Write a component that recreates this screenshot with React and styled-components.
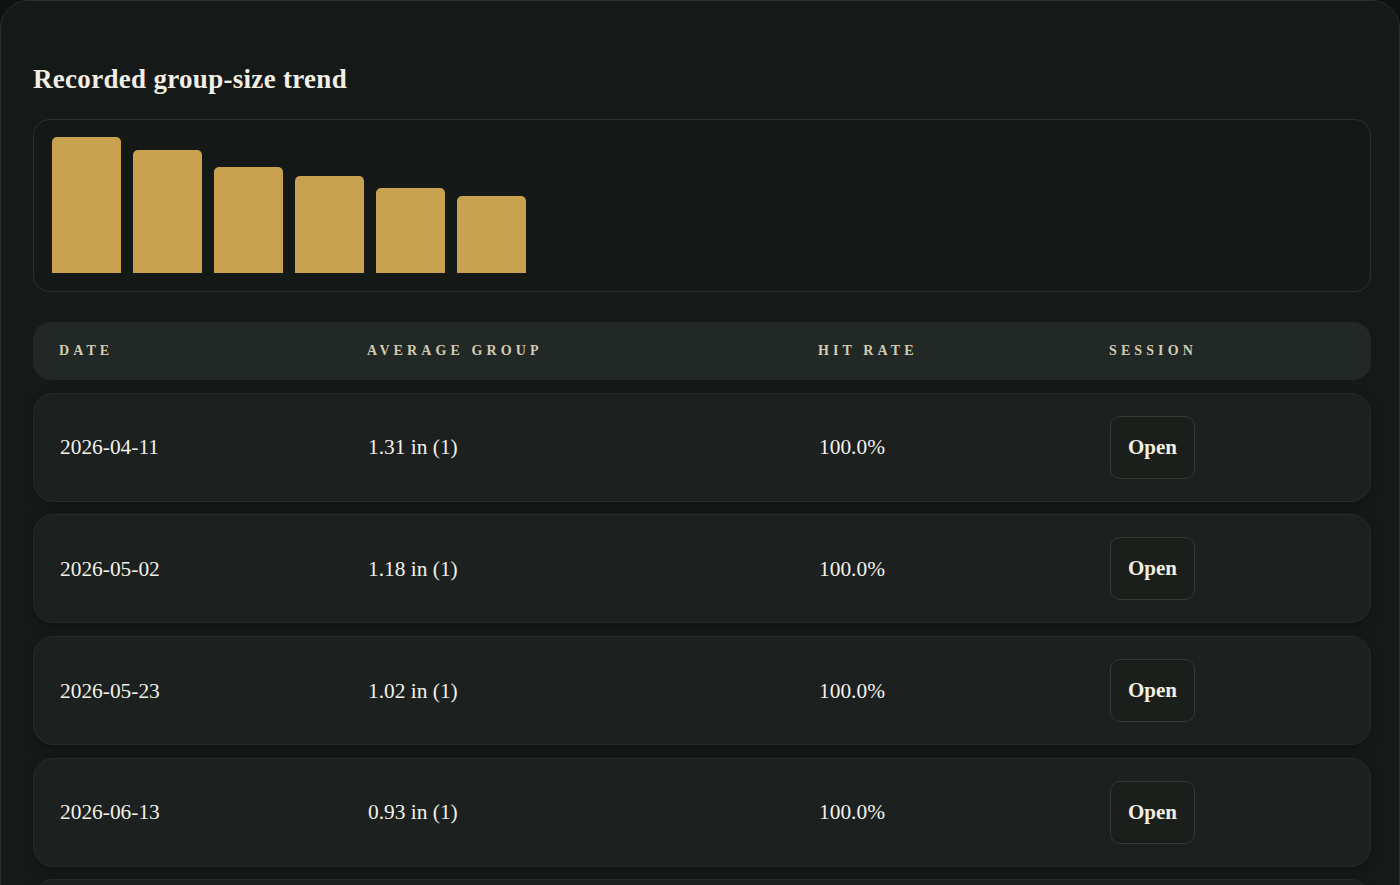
import React from "react";
import styled, { createGlobalStyle } from "styled-components";

const GlobalStyle = createGlobalStyle`
  html, body {
    margin: 0;
    padding: 0;
    background: #0e1210;
  }
  body {
    font-family: "Liberation Serif", "Times New Roman", serif;
    color: #f2efe7;
  }
  * { box-sizing: border-box; }
`;

const Panel = styled.section`
  background: #151918;
  border: 1px solid #2a2e2b;
  border-radius: 28px;
  padding: 32px 28px 32px 32px;
  min-height: 1200px;
`;

const Heading = styled.h2`
  margin: 30px 0 24px;
  font-family: "Liberation Serif", "Times New Roman", serif;
  font-weight: 700;
  font-size: 27px;
  line-height: 32px;
  color: #f1eee6;
  letter-spacing: 0.3px;
`;

const Chart = styled.div`
  display: flex;
  align-items: flex-end;
  gap: 12px;
  height: 173px;
  padding: 17px 18px 18px;
  border: 1px solid #2b2f2b;
  border-radius: 16px;
  background: #141817;
`;

const Bar = styled.div`
  width: 69px;
  flex: none;
  background: #c9a24f;
  border-radius: 5px 5px 0 0;
`;

const Table = styled.div`
  margin-top: 30px;
  display: flex;
  flex-direction: column;
  gap: 12.7px;
`;

const columns = `308px 451px 291px 1fr`;

const HeaderRow = styled.div`
  display: grid;
  grid-template-columns: ${columns};
  align-items: center;
  height: 58px;
  padding: 0 26px;
  background: #222825;
  border-radius: 18px;
`;

const HeaderCell = styled.div`
  font-family: "Liberation Serif", "Times New Roman", serif;
  font-weight: 700;
  font-size: 14px;
  letter-spacing: 4.1px;
  text-transform: uppercase;
  color: #d2cbb3;
`;

const Row = styled.div`
  display: grid;
  grid-template-columns: ${columns};
  align-items: center;
  padding: 22px 26px;
  background: #1c201f;
  border: 1px solid #272b28;
  border-radius: 20px;
  box-shadow: 0 3px 8px rgba(0, 0, 0, 0.25);
`;

const Cell = styled.div`
  font-size: 21.4px;
  line-height: 24px;
  color: #f3f0e8;
`;

const OpenButton = styled.button`
  justify-self: start;
  font-family: "Liberation Serif", "Times New Roman", serif;
  font-weight: 700;
  font-size: 21px;
  line-height: 21px;
  padding: 20px 17px;
  color: #f1eee4;
  background: #1a1f1c;
  border: 1px solid #333a34;
  border-radius: 10px;
  cursor: pointer;
`;

const sessions = [
  { date: "2026-04-11", group: 1.31, hits: 1, rate: "100.0%" },
  { date: "2026-05-02", group: 1.18, hits: 1, rate: "100.0%" },
  { date: "2026-05-23", group: 1.02, hits: 1, rate: "100.0%" },
  { date: "2026-06-13", group: 0.93, hits: 1, rate: "100.0%" },
  { date: "2026-07-04", group: 0.82, hits: 1, rate: "100.0%" },
  { date: "2026-07-25", group: 0.74, hits: 1, rate: "100.0%" },
];

const CHART_HEIGHT = 136;

export default function App() {
  const max = Math.max(...sessions.map((s) => s.group));
  return (
    <>
      <GlobalStyle />
      <Panel>
        <Heading>Recorded group-size trend</Heading>
        <Chart>
          {sessions.map((s) => (
            <Bar
              key={s.date}
              style={{ height: `${Math.round((s.group / max) * CHART_HEIGHT)}px` }}
            />
          ))}
        </Chart>
        <Table>
          <HeaderRow>
            <HeaderCell>Date</HeaderCell>
            <HeaderCell>Average group</HeaderCell>
            <HeaderCell>Hit rate</HeaderCell>
            <HeaderCell>Session</HeaderCell>
          </HeaderRow>
          {sessions.map((s) => (
            <Row key={s.date}>
              <Cell>{s.date}</Cell>
              <Cell>
                {s.group.toFixed(2)} in ({s.hits})
              </Cell>
              <Cell>{s.rate}</Cell>
              <div>
                <OpenButton type="button">Open</OpenButton>
              </div>
            </Row>
          ))}
        </Table>
      </Panel>
    </>
  );
}
